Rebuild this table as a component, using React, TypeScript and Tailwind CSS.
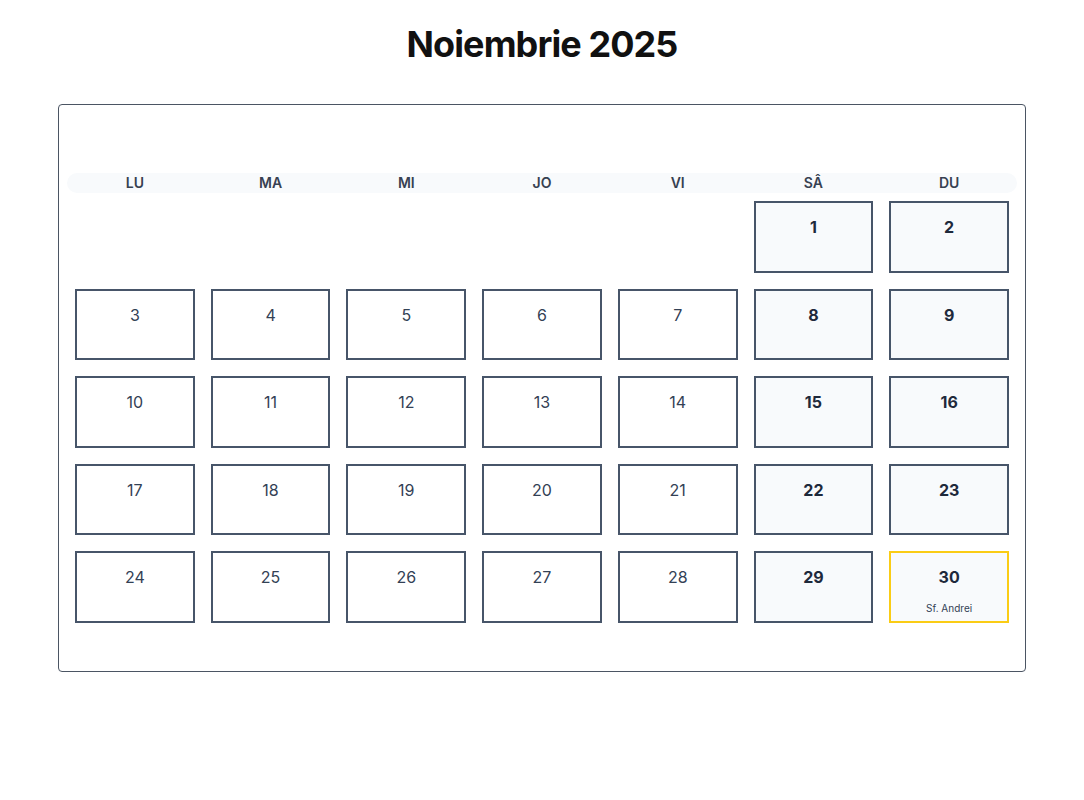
const weekdays = ["LU", "MA", "MI", "JO", "VI", "SÂ", "DU"];

// Noiembrie 2025 starts on a Saturday
const leadingBlanks = 5;
const daysInMonth = 30;
const holidays: Record<number, string> = { 30: "Sf. Andrei" };

function DayCell({ day, weekend }: { day: number; weekend: boolean }) {
  const holiday = holidays[day];
  const border = holiday ? "border-[#facc15]" : "border-[#475569]";
  return (
    <div className="p-2">
      <div
        className={`flex h-[71.5px] flex-col items-center border-2 pt-[14px] ${border} ${weekend || holiday ? "bg-[#f8fafc]" : "bg-white"}`}
      >
        <span className={`text-base leading-5 ${weekend ? "font-bold text-[#1e293b]" : "text-[#334155]"}`}>{day}</span>
        {holiday && <span className="mt-[15px] text-[10px] leading-3 text-[#334155]">{holiday}</span>}
      </div>
    </div>
  );
}

export default function App() {
  const cells: (number | null)[] = [];
  for (let i = 0; i < leadingBlanks; i++) cells.push(null);
  for (let d = 1; d <= daysInMonth; d++) cells.push(d);

  return (
    <div className="min-h-screen bg-white pt-6 font-['Inter',sans-serif]">
      <h1 className="text-center text-[36px] font-bold leading-10 tracking-tight text-[#111111]">Noiembrie 2025</h1>

      <div className="mx-auto mt-10 h-[568px] w-[968px] rounded border border-[#4b5563] px-2 pt-[68px]">
        <div className="grid grid-cols-7 rounded-full bg-[#f8fafc]">
          {weekdays.map(w => (
            <div key={w} className="text-center text-sm font-semibold leading-5 text-[#374151]">{w}</div>
          ))}
        </div>
        <div className="grid grid-cols-7">
          {cells.map((d, i) =>
            d === null ? (
              <div key={`b${i}`} />
            ) : (
              <DayCell key={d} day={d} weekend={i % 7 >= 5} />
            )
          )}
        </div>
      </div>
    </div>
  );
}
